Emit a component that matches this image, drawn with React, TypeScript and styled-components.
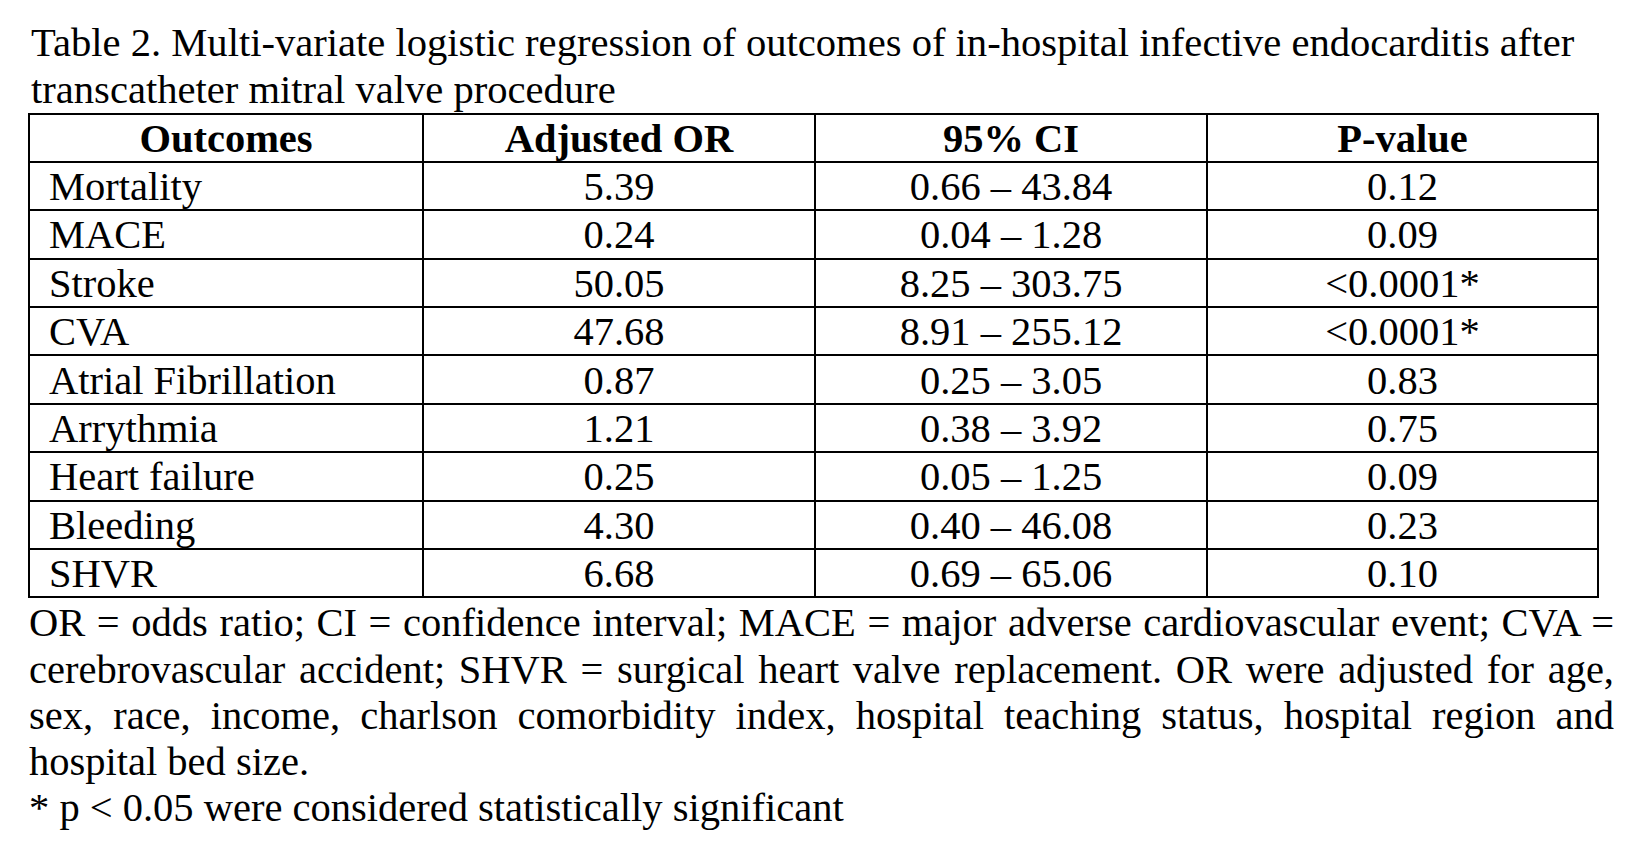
import React from "react";
import styled, { createGlobalStyle } from "styled-components";

type Row = {
  outcome: string;
  or: string;
  ci: string;
  p: string;
};

const rows: Row[] = [
  { outcome: "Mortality", or: "5.39", ci: "0.66 – 43.84", p: "0.12" },
  { outcome: "MACE", or: "0.24", ci: "0.04 – 1.28", p: "0.09" },
  { outcome: "Stroke", or: "50.05", ci: "8.25 – 303.75", p: "<0.0001*" },
  { outcome: "CVA", or: "47.68", ci: "8.91 – 255.12", p: "<0.0001*" },
  { outcome: "Atrial Fibrillation", or: "0.87", ci: "0.25 – 3.05", p: "0.83" },
  { outcome: "Arrythmia", or: "1.21", ci: "0.38 – 3.92", p: "0.75" },
  { outcome: "Heart failure", or: "0.25", ci: "0.05 – 1.25", p: "0.09" },
  { outcome: "Bleeding", or: "4.30", ci: "0.40 – 46.08", p: "0.23" },
  { outcome: "SHVR", or: "6.68", ci: "0.69 – 65.06", p: "0.10" },
];

const colWidths = [394, 392, 392, 391];

const notes = [
  "OR = odds ratio; CI = confidence interval; MACE = major adverse cardiovascular event; CVA =",
  "cerebrovascular accident; SHVR = surgical heart valve replacement. OR were adjusted for age,",
  "sex, race, income, charlson comorbidity index, hospital teaching status, hospital region and",
];

const App = () => (
  <Page>
    <GlobalStyle />
    <Caption>
      Table 2. Multi-variate logistic regression of outcomes of in-hospital infective endocarditis after
      <br />
      transcatheter mitral valve procedure
    </Caption>
    <Table>
      <colgroup>
        {colWidths.map((w, i) => (
          <Col key={i} $w={w} />
        ))}
      </colgroup>
      <thead>
        <HeadRow>
          <HeadCell>Outcomes</HeadCell>
          <HeadCell>Adjusted OR</HeadCell>
          <HeadCell>95% CI</HeadCell>
          <HeadCell>P-value</HeadCell>
        </HeadRow>
      </thead>
      <tbody>
        {rows.map((r) => (
          <BodyRow key={r.outcome}>
            <Cell $left>{r.outcome}</Cell>
            <Cell>{r.or}</Cell>
            <Cell>{r.ci}</Cell>
            <Cell>{r.p}</Cell>
          </BodyRow>
        ))}
      </tbody>
    </Table>
    <Notes>
      {notes.map((n) => (
        <NoteLine key={n} $justify>
          {n}
        </NoteLine>
      ))}
      <NoteLine>hospital bed size.</NoteLine>
      <NoteLine>* p &lt; 0.05 were considered statistically significant</NoteLine>
    </Notes>
  </Page>
);

export default App;

const GlobalStyle = createGlobalStyle`
  html, body {
    margin: 0;
    padding: 0;
    background: #ffffff;
  }
  body {
    font-family: "Liberation Serif", "Times New Roman", serif;
    color: #000000;
  }
`;

const Page = styled.div`
  width: 1649px;
  height: 866px;
  box-sizing: border-box;
  padding: 20px 0 0 28px;
  background: #ffffff;
  overflow: hidden;
`;

const Caption = styled.div`
  padding-left: 3px;
  font-size: 40.6px;
  line-height: 46.6px;
  white-space: nowrap;
`;

const Table = styled.table`
  table-layout: fixed;
  width: 1571px;
  border-collapse: separate;
  border-spacing: 0;
  border-top: 2px solid #000;
  border-left: 2px solid #000;
  font-size: 40.5px;
`;

const Col = styled.col<{ $w: number }>`
  width: ${(p) => p.$w}px;
`;

const HeadRow = styled.tr`
  height: 47.7px;
`;

const BodyRow = styled.tr`
  height: 48.4px;
`;

const HeadCell = styled.th`
  box-sizing: border-box;
  padding: 2px 0 0;
  border-right: 2px solid #000;
  border-bottom: 2px solid #000;
  font-weight: 700;
  line-height: 42px;
  text-align: center;
  vertical-align: middle;
  white-space: nowrap;
`;

const Cell = styled.td<{ $left?: boolean }>`
  box-sizing: border-box;
  padding: 2px 0 0 ${(p) => (p.$left ? "19px" : "0")};
  border-right: 2px solid #000;
  border-bottom: 2px solid #000;
  line-height: 42px;
  text-align: ${(p) => (p.$left ? "left" : "center")};
  vertical-align: middle;
  white-space: nowrap;
`;

const Notes = styled.div`
  width: 1585px;
  margin-top: 2px;
  padding-left: 1px;
  font-size: 40.5px;
  line-height: 46.2px;
`;

const NoteLine = styled.div<{ $justify?: boolean }>`
  text-align: ${(p) => (p.$justify ? "justify" : "left")};
  text-align-last: ${(p) => (p.$justify ? "justify" : "left")};
  white-space: nowrap;
`;
